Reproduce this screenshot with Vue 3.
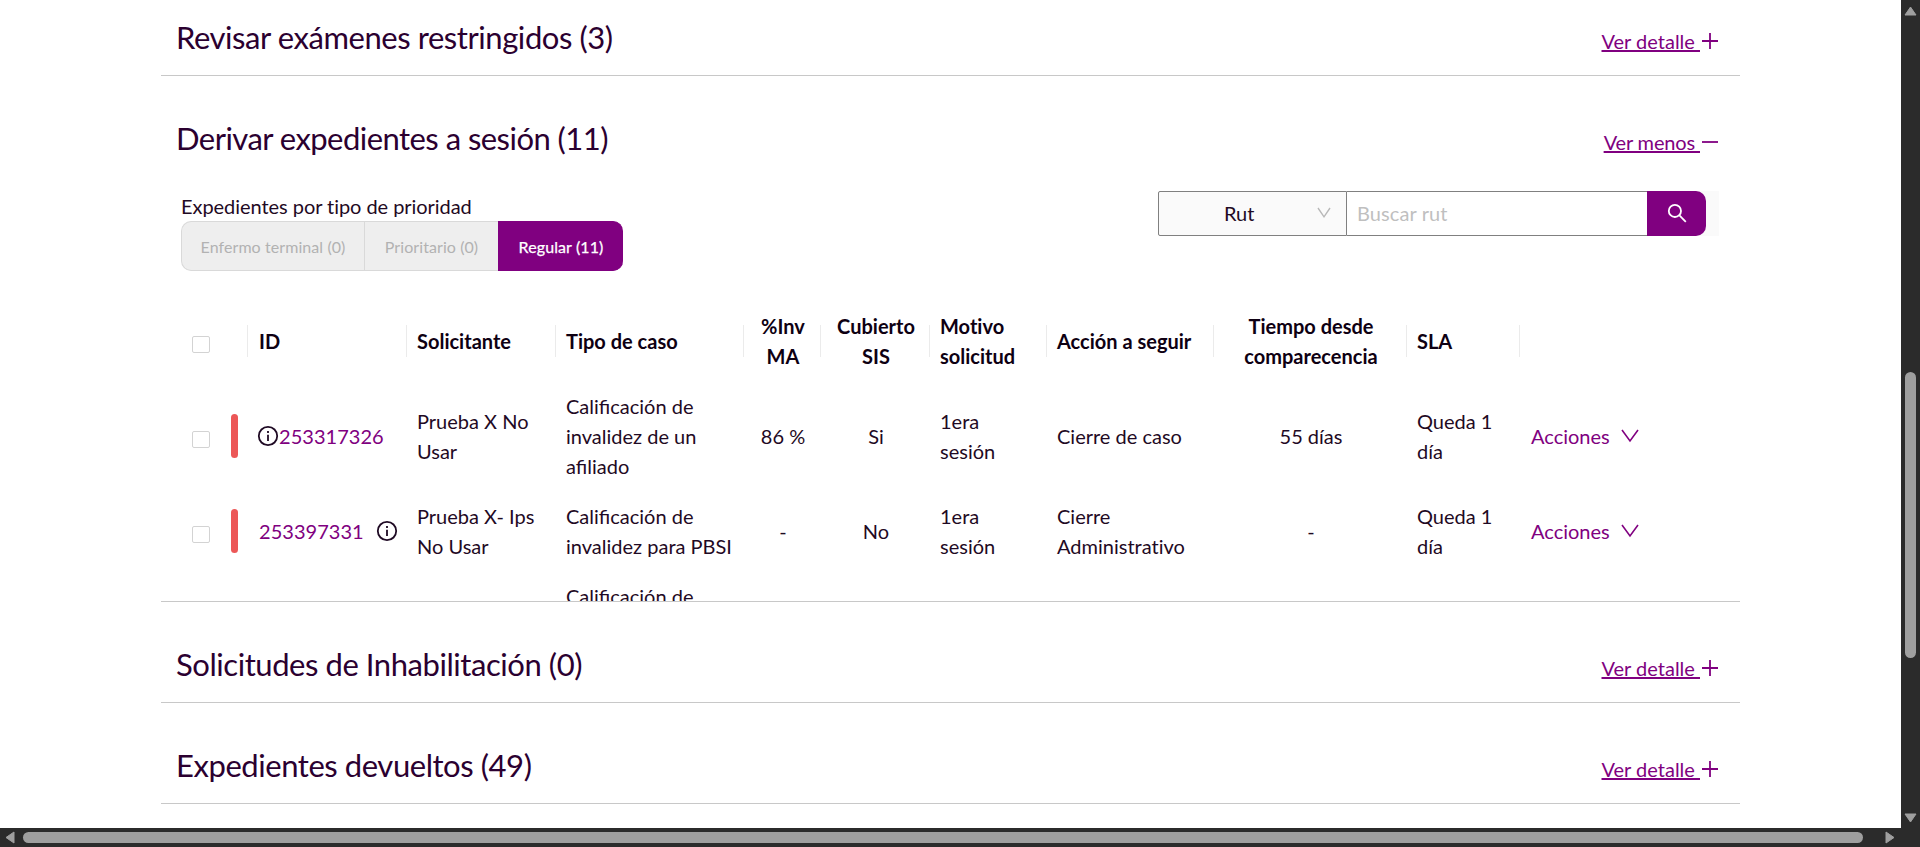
<script setup>
const priorities = [
  { label: 'Enfermo terminal (0)', active: false },
  { label: 'Prioritario (0)', active: false },
  { label: 'Regular (11)', active: true },
]
const columns = [
  { key: 'id', label: 'ID' },
  { key: 'solicitante', label: 'Solicitante' },
  { key: 'tipo', label: 'Tipo de caso', wide: true },
  { key: 'inv', label: '%Inv MA', center: true },
  { key: 'sis', label: 'Cubierto SIS', center: true },
  { key: 'motivo', label: 'Motivo solicitud' },
  { key: 'accion', label: 'Acción a seguir' },
  { key: 'tiempo', label: 'Tiempo desde comparecencia', center: true },
  { key: 'sla', label: 'SLA' },
]
const dataColumns = columns.slice(1)
const rows = [
  { id: '253317326', iconFirst: true, solicitante: 'Prueba X No Usar', tipo: 'Calificación de invalidez de un afiliado', inv: '86 %', sis: 'Si', motivo: '1era sesión', accion: 'Cierre de caso', tiempo: '55 días', sla: 'Queda 1 día' },
  { id: '253397331', iconFirst: false, solicitante: 'Prueba X- Ips No Usar', tipo: 'Calificación de invalidez para PBSI', inv: '-', sis: 'No', motivo: '1era sesión', accion: 'Cierre Administrativo', tiempo: '-', sla: 'Queda 1 día' },
]
</script>

<template>
  <div class="window">
    <main class="page">
      <section class="panel">
        <header class="panel-head">
          <h2>Revisar exámenes restringidos (3)</h2>
          <a class="toggle"><span>Ver detalle&nbsp;</span><svg width="20" height="20" viewBox="0 0 20 20"><path d="M2 10h16M10 2v16" /></svg></a>
        </header>
      </section>

      <section class="panel open">
        <header class="panel-head">
          <h2 class="tight">Derivar expedientes a sesión (11)</h2>
          <a class="toggle less"><span>Ver menos&nbsp;</span><svg width="20" height="20" viewBox="0 0 20 20"><path d="M2 10h16" /></svg></a>
        </header>
        <div class="filters">
          <div>
            <div class="caption">Expedientes por tipo de prioridad</div>
            <div class="segments">
              <button v-for="p in priorities" :key="p.label" :class="{ active: p.active }">{{ p.label }}</button>
            </div>
          </div>
          <div class="search">
            <div class="select">
              <span>Rut</span>
              <svg width="14" height="12" viewBox="0 0 14 12"><path d="M1 1L7 9.8L13 1" /></svg>
            </div>
            <div class="input">Buscar rut</div>
            <button class="go">
              <svg width="20" height="20" viewBox="0 0 20 20"><circle cx="7.9" cy="7.9" r="6.1" /><path d="M12.2 12.2L18.8 18.8" /></svg>
            </button>
          </div>
        </div>

        <div class="grid">
          <div class="row head">
            <div class="cell check"><i class="box"></i></div>
            <div v-for="c in columns" :key="c.key" class="cell" :class="{ center: c.center }">{{ c.label }}</div>
            <div class="cell"></div>
          </div>
          <div v-for="r in rows" :key="r.id" class="row">
            <div class="cell check"><i class="box"></i><i class="flag"></i></div>
            <div class="cell id" :class="{ reversed: !r.iconFirst }">
              <svg width="22" height="22" viewBox="0 0 22 22"><circle cx="11" cy="11" r="9.2" /><path d="M11 9.8v6.2M11 6v2" /></svg>
              <a>{{ r.id }}</a>
            </div>
            <div v-for="c in dataColumns" :key="c.key" class="cell" :class="{ center: c.center, wide: c.wide }">{{ r[c.key] }}</div>
            <div class="cell actions">
              <span>Acciones</span>
              <svg width="18" height="14" viewBox="0 0 18 14"><path d="M1 1L9 12L17 1" /></svg>
            </div>
          </div>
          <div class="row">
            <div class="cell"></div><div class="cell"></div><div class="cell"></div>
            <div class="cell wide">Calificación de</div>
          </div>
        </div>
      </section>

      <section v-for="t in ['Solicitudes de Inhabilitación (0)', 'Expedientes devueltos (49)']" :key="t" class="panel">
        <header class="panel-head">
          <h2>{{ t }}</h2>
          <a class="toggle"><span>Ver detalle&nbsp;</span><svg width="20" height="20" viewBox="0 0 20 20"><path d="M2 10h16M10 2v16" /></svg></a>
        </header>
      </section>
    </main>

    <aside class="vbar">
      <svg width="13" height="10" viewBox="0 0 13 10"><path d="M6.5 1L12 9H1Z" /></svg>
      <i></i>
      <svg width="13" height="10" viewBox="0 0 13 10"><path d="M6.5 9L12 1H1Z" /></svg>
    </aside>
    <div class="hbar">
      <svg width="10" height="13" viewBox="0 0 10 13"><path d="M1 6.5L9 1V12Z" /></svg>
      <i></i>
      <svg width="10" height="13" viewBox="0 0 10 13"><path d="M9 6.5L1 1V12Z" /></svg>
    </div>
  </div>
</template>

<style>
body { margin: 0; overflow: hidden; }
</style>

<style scoped>
* { box-sizing: border-box; }
.window {
  width: 1920px; height: 847px; overflow: hidden;
  display: grid; grid-template: 828px 19px / 1901px 19px;
  background: #fff; color: #1f0a24;
  font: 20px/30px Lato, "Noto Sans", sans-serif;
  font-variant-ligatures: none;
}
.page { width: 1579px; margin-left: 161px; overflow: hidden; }
.panel { height: 101px; border-bottom: 1px solid #c8c8c8; overflow: hidden; }
.panel:first-child { height: 76px; }
.panel:first-child .panel-head { margin-top: -25px; }
.panel.open { height: 526px; }
.panel-head { height: 100px; display: flex; justify-content: space-between; padding: 38px 20px 0 15px; }
h2 { margin: 0; font-size: 31px; line-height: 48px; font-weight: 400; color: #2b0030; letter-spacing: -0.44px; }
h2.tight { letter-spacing: -0.54px; }
.toggle { display: flex; align-items: center; height: 30px; margin-top: 13px; color: #800080; }
.toggle span { text-decoration: underline; text-decoration-thickness: 2px; }
.less { letter-spacing: -0.15px; }
svg { fill: none; stroke: currentColor; stroke-width: 1.8; flex: none; }
.filters { display: flex; justify-content: space-between; height: 126px; padding: 15px 21px 0 20px; }
.caption { height: 30px; letter-spacing: -0.05px; }
.segments { display: grid; grid-template-columns: 183px 134px 125px; height: 50px; }
.segments button {
  height: 50px; padding: 1px 0 0; font: 16px Lato, sans-serif; white-space: nowrap;
  background: #eee; color: #b2b2b2; border: 1px solid #d9d9d9; border-right: 0; letter-spacing: 0.08px;
}
.segments button:first-child { border-radius: 10px 0 0 10px; }
.segments .active { background: #800080; color: #fff; border-color: #800080; border-radius: 0 10px 10px 0; letter-spacing: 0.1px; -webkit-text-stroke: 0.25px #fff; }
.search { display: flex; height: 45px; width: 561px; background: #fafafa; }
.select {
  width: 189px; border: 1px solid #808080; border-radius: 2px 0 0 2px; background: #fafafa;
  display: flex; align-items: center; padding: 0 15px 2px 65px; justify-content: space-between;
}
.select svg { color: #b8b8b8; stroke-width: 1.4; }
.input { width: 300px; background: #fff; border: 1px solid #808080; border-width: 1px 0; padding: 6px 10px; color: #bfbfbf; letter-spacing: 0.1px; }
.go { width: 59px; border: 0; border-radius: 0 10px 10px 0; background: #800080; color: #fff; padding: 0 0 2px; display: flex; align-items: center; justify-content: center; }
.row { display: grid; grid-template-columns: 87px 159px 149px 188px 77px 109px 117px 167px 193px 113px 150px; }
.row:not(.head) .cell { top: -1px; }
.cell { padding: 10px 12px 10px 10px; display: flex; align-items: center; position: relative; }
.wide { padding-right: 4px; font-variant-ligatures: normal; }
.center { justify-content: center; text-align: center; padding: 10px 11px 10px 12px; }
.head { font-weight: 700; color: #0e0012; height: 80px; }
.head .cell { padding-top: 9px; padding-bottom: 11px; }
.head .cell:nth-child(2), .actions { padding-left: 11px; }
.head .cell:not(:last-child)::after { content: ""; position: absolute; right: 0; top: 23px; width: 1px; height: 32px; background: #ebebeb; }
.cell.check { padding-left: 31px; padding-right: 0; }
.box { width: 18px; height: 17px; border: 1px solid #d3d3d3; border-radius: 2px; margin-top: 7px; }
.flag { width: 7px; height: 44px; border-radius: 4px; background: #ec5757; margin-left: 21px; }
.id { padding: 10px 9px; }
.id svg { margin-top: -1px; }
.id a, .actions { color: #800080; }
.id a { letter-spacing: 0.04px; }
.reversed { flex-direction: row-reverse; justify-content: space-between; padding-left: 11px; }
.actions svg { margin-left: 11px; stroke-width: 1.6; }
.vbar { background: #2b2b2b; color: #9f9f9f; position: relative; }
.hbar { background: #2b2b2b; color: #9f9f9f; position: relative; grid-column: 1 / 3; }
.vbar svg, .hbar svg { position: absolute; fill: currentColor; stroke-width: 1; stroke-linejoin: round; }
.vbar svg { left: 3px; top: 6px; }
.vbar svg:last-child { top: 813px; }
.hbar svg { top: 3px; left: 5px; }
.hbar svg:last-child { left: 1885px; }
.vbar i, .hbar i { position: absolute; background: #9f9f9f; border-radius: 6px; }
.vbar i { left: 4px; top: 372px; width: 11px; height: 286px; }
.hbar i { left: 23px; top: 4px; width: 1840px; height: 11px; }
</style>
